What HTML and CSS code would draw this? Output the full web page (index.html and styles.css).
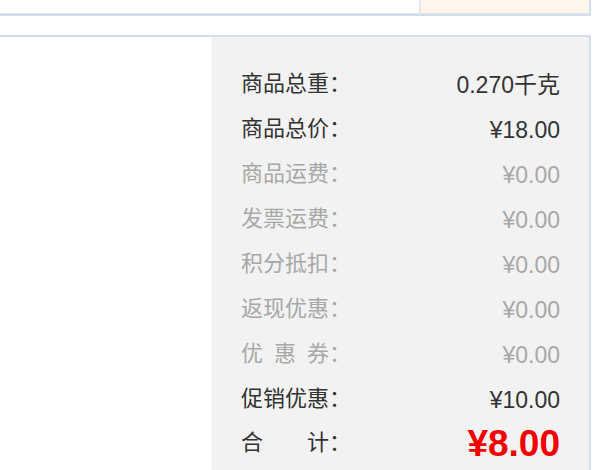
FILE: index.html
```html
<!DOCTYPE html>
<html lang="zh-CN">
<head>
<meta charset="utf-8">
<title>订单金额</title>
<link rel="stylesheet" href="styles.css">
</head>
<body>
<div class="page">
  <div class="top-box">
    <div class="top-left"></div>
    <div class="top-sep"></div>
    <div class="top-right"></div>
  </div>
  <div class="sum-box">
    <div class="sum-blank"></div>
    <div class="sum-panel">
      <div class="row dark"><span class="label">商品总重：</span><span class="value">0.270千克</span></div>
      <div class="row dark"><span class="label">商品总价：</span><span class="value">¥18.00</span></div>
      <div class="row muted"><span class="label">商品运费：</span><span class="value">¥0.00</span></div>
      <div class="row muted"><span class="label">发票运费：</span><span class="value">¥0.00</span></div>
      <div class="row muted"><span class="label">积分抵扣：</span><span class="value">¥0.00</span></div>
      <div class="row muted"><span class="label">返现优惠：</span><span class="value">¥0.00</span></div>
      <div class="row muted"><span class="label"><span class="spaced">优惠</span>券：</span><span class="value">¥0.00</span></div>
      <div class="row dark"><span class="label">促销优惠：</span><span class="value">¥10.00</span></div>
      <div class="row dark total"><span class="label">合　　计：</span><span class="value">¥8.00</span></div>
    </div>
  </div>
</div>
</body>
</html>
```

FILE: styles.css
```css
html, body {
  margin: 0;
  padding: 0;
  background: #ffffff;
}

.page {
  width: 591px;
  font-family: "Liberation Sans", "Noto Sans CJK SC", sans-serif;
}

.top-box {
  display: flex;
  height: 13px;
  border-bottom: 1px solid #e6e1dc;
  border-right: 2px solid #cddff1;
  box-shadow: 0 2px 0 #cddff1;
  margin-bottom: 21px;
}

.top-left {
  flex: 1;
  background: #ffffff;
}

.top-sep {
  width: 2px;
  background: #e6e6e6;
}

.top-right {
  width: 168px;
  background: #fff5ea;
}

.sum-box {
  display: flex;
  border-top: 2px solid #cddff1;
  border-right: 2px solid #cddff1;
  height: 433px;
}

.sum-blank {
  width: 212px;
  background: #ffffff;
}

.sum-panel {
  flex: 1;
  background: #f2f2f2;
  border-left: 1px solid #ebebeb;
  padding: 24px 29px 0 28px;
}

.row {
  display: flex;
  justify-content: space-between;
  align-items: center;
  height: 45px;
}

.label {
  font-family: "Noto Sans CJK SC", sans-serif;
  font-size: 22px;
  line-height: 22px;
  margin-bottom: 5px;
}

.spaced {
  letter-spacing: 11px;
}

.value {
  font-size: 23px;
  line-height: 23px;
  margin-top: 3px;
}

.dark {
  color: #333333;
}

.muted {
  color: #a8a8a8;
}

.total {
  height: 43px;
}

.total .value {
  color: #f40000;
  font-size: 37px;
  line-height: 37px;
  font-weight: bold;
  margin-top: 2px;
}
```
